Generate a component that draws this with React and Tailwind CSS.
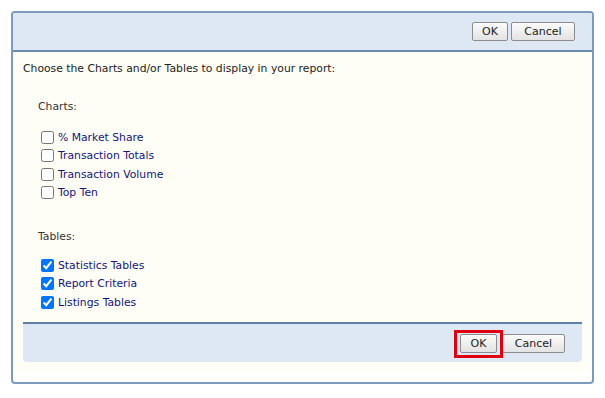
import React from "react";

function Btn({ children, w }) {
  return (
    <button
      className={`h-[19px] ${w} border border-[#8d8d8d] rounded-[2px] bg-gradient-to-b from-[#fbfbfb] to-[#e3e3e3] text-[11px] text-[#222] leading-none flex items-center justify-center`}
      style={{ fontFamily: '"DejaVu Sans", Verdana, sans-serif' }}
    >
      {children}
    </button>
  );
}

function Item({ label, checked }) {
  return (
    <label className="flex items-center h-[18.5px] pl-[3px]">
      <input
        type="checkbox"
        defaultChecked={checked}
        className="m-0 w-[13px] h-[13px] mr-[4px]"
      />
      <span className="text-[#14147a]">{label}</span>
    </label>
  );
}

export default function App() {
  return (
    <div
      className="w-[605px] h-[398px] bg-white pt-[11px] pl-[11px]"
      style={{ fontFamily: '"DejaVu Sans", Verdana, sans-serif' }}
    >
      <div className="w-[583px] h-[373px] border-2 border-[#7d9bbf] rounded-[4px] bg-white flex flex-col overflow-hidden">
        <div className="h-[39px] shrink-0 bg-[#dee8f5] border-b-2 border-[#6c8aad] flex items-center justify-end pr-[17px] gap-[3px]">
          <Btn w="w-[36px]">OK</Btn>
          <Btn w="w-[64px]">Cancel</Btn>
        </div>
        <div className="h-[320px] bg-[#fffef6] flex flex-col text-[10.8px] leading-[13px] text-[#222]">
          <div className="pl-[10px] pt-[10px] h-[34px]">Choose the Charts and/or Tables to display in your report:</div>
          <div className="pl-[25px]">
            <div className="pt-[14px] h-[42px] text-[#333]">Charts:</div>
            <Item label="% Market Share" />
            <Item label="Transaction Totals" />
            <Item label="Transaction Volume" />
            <Item label="Top Ten" />
            <div className="pt-[28px] h-[54px] text-[#333]">Tables:</div>
            <Item label="Statistics Tables" checked />
            <Item label="Report Criteria" checked />
            <Item label="Listings Tables" checked />
          </div>
          <div className="mt-auto mx-[10px] h-[40px] bg-[#dee8f5] border-t-2 border-[#5f7fa6] rounded-b-[4px] flex items-center justify-end pr-[17px] gap-[5px] mb-[10px]">
            <div className="relative">
              <Btn w="w-[37px]">OK</Btn>
              <div className="absolute -left-[6px] -right-[6px] -top-[4px] -bottom-[5px] border-[3px] border-[#e0000f]" />
            </div>
            <Btn w="w-[63px]">Cancel</Btn>
          </div>
        </div>
      </div>
    </div>
  );
}
